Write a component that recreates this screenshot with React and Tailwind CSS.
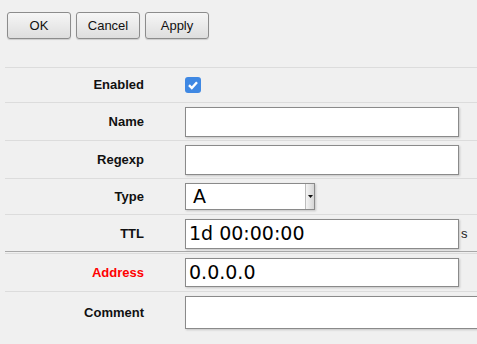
import React from "react";

const Label = ({ children, red }) => (
  <div
    className={`w-[139px] shrink-0 text-right text-[13px] font-bold ${
      red ? "text-[#ff0000]" : "text-[#111]"
    }`}
  >
    {children}
  </div>
);

const TextBox = ({ value = "", w = "w-[274px]", h = "h-[30px]" }) => (
  <div
    className={`${w} ${h} shrink-0 border border-[#8a8a8a] bg-white px-[3px] flex items-center text-[19px] text-black shadow-[1px_1px_2px_rgba(0,0,0,0.18)] whitespace-nowrap overflow-hidden`}
    style={{ fontFamily: '"DejaVu Sans", sans-serif' }}
  >
    {value}
  </div>
);

const Row = ({ children, className = "" }) => (
  <div className={`flex items-center gap-[41px] border-t border-[#dcdcdc] ${className}`}>
    {children}
  </div>
);

const Button = ({ children }) => (
  <button className="h-[27px] w-[64px] rounded-[3px] border border-[#8c8c8c] bg-gradient-to-b from-[#f6f6f6] to-[#dedede] text-[13px] text-[#111] shadow-[0_1px_1px_rgba(0,0,0,0.15)]">
    {children}
  </button>
);

export default function App() {
  return (
    <div
      className="w-[477px] h-[344px] overflow-hidden bg-[#f0f0f0]"
      style={{ fontFamily: '"Liberation Sans", Arial, sans-serif' }}
    >
      {/* Toolbar */}
      <div className="flex gap-[5px] pl-[7px] pt-[12px]">
        <Button>OK</Button>
        <Button>Cancel</Button>
        <Button>Apply</Button>
      </div>

      {/* Form */}
      <div className="ml-[5px] mt-[28px]">
        <Row className="h-[35px]">
          <Label>Enabled</Label>
          <div className="flex h-[16px] w-[16px] items-center justify-center rounded-[3px] bg-[#3f88e3]">
            <svg width="12" height="12" viewBox="0 0 12 12">
              <path d="M2 6.2 L4.8 9 L10 3.2" fill="none" stroke="white" strokeWidth="2.4" />
            </svg>
          </div>
        </Row>
        <Row className="h-[38px] pt-[4px] pb-[3px]">
          <Label>Name</Label>
          <TextBox />
        </Row>
        <Row className="h-[38px] pt-[4px] pb-[3px]">
          <Label>Regexp</Label>
          <TextBox />
        </Row>
        <Row className="h-[36px] pt-[4px] pb-[4px]">
          <Label>Type</Label>
          <div
            className="flex h-[27px] w-[130px] border border-[#8a8a8a] bg-white shadow-[1px_1px_2px_rgba(0,0,0,0.18)]"
            style={{ fontFamily: '"DejaVu Sans", sans-serif' }}
          >
            <div className="flex-1 pl-[7px] text-[19px] leading-[25px] text-black">A</div>
            <div className="flex w-[9px] items-center justify-center border-l border-[#bdbdbd] bg-gradient-to-r from-[#f4f4f4] to-[#d6d6d6]">
              <svg width="5" height="3" viewBox="0 0 5 3">
                <path d="M0 0 H5 L2.5 3 Z" fill="#111" />
              </svg>
            </div>
          </div>
        </Row>
        <Row className="h-[38px] pt-[4px] pb-[3px] border-b border-b-[#a8a8a8]">
          <Label>TTL</Label>
          <div className="flex items-end gap-[2px]">
            <TextBox value="1d 00:00:00" />
            <span className="pb-[5px] text-[13px] text-[#222]">s</span>
          </div>
        </Row>
        <Row className="mt-[1px] h-[38px] pt-[4px] pb-[4px]">
          <Label red>Address</Label>
          <TextBox value="0.0.0.0" h="h-[29px]" />
        </Row>
        <Row className="h-[45px] pt-[4px] items-start">
          <div className="flex h-[33px] items-center">
            <Label>Comment</Label>
          </div>
          <TextBox w="w-[330px]" h="h-[33px]" />
        </Row>
      </div>
    </div>
  );
}
